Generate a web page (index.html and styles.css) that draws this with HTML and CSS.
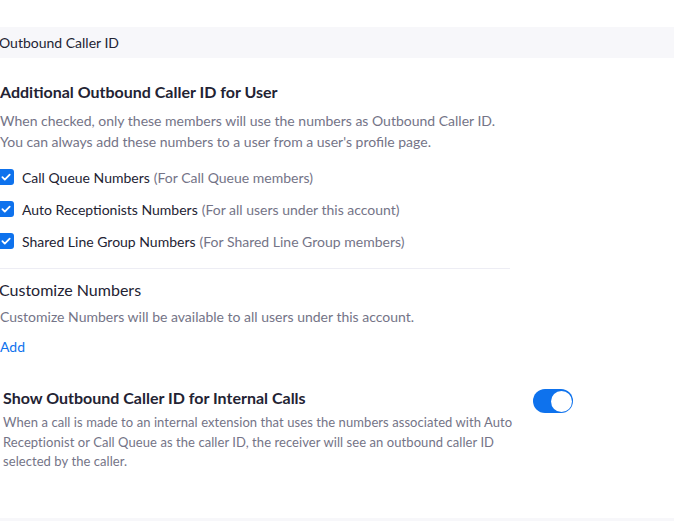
FILE: index.html
```html
<!DOCTYPE html>
<html>
<head>
<meta charset="utf-8">
<link rel="stylesheet" href="styles.css">
</head>
<body>
<div class="page">
  <div class="band">Outbound Caller ID</div>
  <section class="block">
    <h2 class="title">Additional Outbound Caller ID for User</h2>
    <p class="desc">When checked, only these members will use the numbers as Outbound Caller ID.<br>You can always add these numbers to a user from a user's profile page.</p>
    <ul class="checks">
      <li class="check"><span class="box"><svg viewBox="0 0 16 16" width="16" height="16"><path d="M4.4 8.2l2.4 2.4 4.9-5" fill="none" stroke="#fff" stroke-width="1.8" stroke-linecap="round" stroke-linejoin="round"/></svg></span><span class="label">Call Queue Numbers</span><span class="note">(For Call Queue members)</span></li>
      <li class="check"><span class="box"><svg viewBox="0 0 16 16" width="16" height="16"><path d="M4.4 8.2l2.4 2.4 4.9-5" fill="none" stroke="#fff" stroke-width="1.8" stroke-linecap="round" stroke-linejoin="round"/></svg></span><span class="label">Auto Receptionists Numbers</span><span class="note">(For all users under this account)</span></li>
      <li class="check"><span class="box"><svg viewBox="0 0 16 16" width="16" height="16"><path d="M4.4 8.2l2.4 2.4 4.9-5" fill="none" stroke="#fff" stroke-width="1.8" stroke-linecap="round" stroke-linejoin="round"/></svg></span><span class="label">Shared Line Group Numbers</span><span class="note">(For Shared Line Group members)</span></li>
    </ul>
    <hr class="divider">
    <h3 class="subtitle">Customize Numbers</h3>
    <p class="desc single">Customize Numbers will be available to all users under this account.</p>
    <a class="link" href="#">Add</a>
  </section>
  <section class="row">
    <div class="row-text">
      <h2 class="title2">Show Outbound Caller ID for Internal Calls</h2>
      <p class="desc2">When a call is made to an internal extension that uses the numbers associated with Auto Receptionist or Call Queue as the caller ID, the receiver will see an outbound caller ID selected by the caller.</p>
    </div>
    <div class="toggle"><span class="knob"></span></div>
  </section>
  <div class="bottom"></div>
</div>
</body>
</html>
```
FILE: styles.css
```css
* { box-sizing: border-box; }
html, body { margin: 0; padding: 0; background: #fff; }
body { font-family: Lato, "Open Sans", sans-serif; color: #232333; width: 674px; height: 521px; overflow: hidden; }
.page { padding-top: 27px; }
.band { background: #f7f7fa; height: 31px; line-height: 31px; font-size: 14px; padding-left: 0; margin-left: -1px; }
.block { width: 510px; padding-top: 23px; }
.title { margin: 0; font-size: 16px; font-weight: 700; line-height: 22px; }
.desc { margin: 7px 0 0; font-size: 14px; line-height: 21px; color: #747487; }
.checks { list-style: none; margin: 9px 0 0; padding: 0; }
.check { display: flex; align-items: center; height: 32px; font-size: 14px; margin-left: -2px; }
.box { width: 16px; height: 16px; border-radius: 3px; background: #0e72ed; margin-right: 8px; display: flex; flex: none; }
.label { color: #232333; }
.note { color: #747487; margin-left: 4px; }
.divider { border: 0; border-top: 1px solid #ededf4; margin: 11px 0 0; }
.subtitle { margin: 10px 0 0 -1px; font-size: 16px; font-weight: 400; line-height: 22px; }
.single { margin-top: 5px; }
.link { display: block; margin-top: 10px; font-size: 14px; color: #0e72ed; text-decoration: none; line-height: 20px; }
.row { display: flex; align-items: flex-start; padding-left: 3px; margin-top: 30px; }
.row-text { width: 530px; }
.title2 { margin: 0; font-size: 16px; font-weight: 700; line-height: 22px; }
.desc2 { margin: 4px 0 0; font-size: 13px; letter-spacing: 0.07px; line-height: 19.5px; color: #747487; }
.toggle { width: 40px; height: 24px; border-radius: 12px; background: #0e72ed; margin-top: 2px; display: flex; align-items: center; justify-content: flex-end; padding-right: 1px; }
.knob { width: 21px; height: 21px; border-radius: 50%; background: #fff; }
.bottom { position: absolute; left: 0; top: 518px; width: 674px; height: 3px; background: #f7f7fa; }
```
